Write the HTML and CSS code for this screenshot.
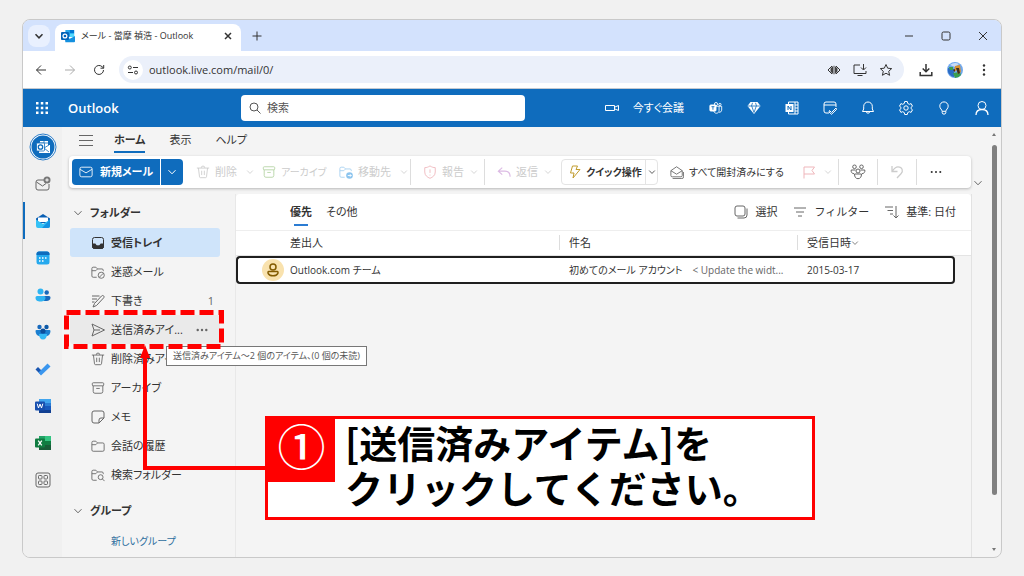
FILE: index.html
```html
<!DOCTYPE html>
<html lang="ja">
<head>
<meta charset="utf-8">
<meta name="viewport" content="width=device-width, initial-scale=1">
<title>メール - Outlook</title>
<link rel="stylesheet" href="styles.css">
</head>
<body>
<svg class="defs" aria-hidden="true">
  <symbol id="chev" viewBox="0 0 10 10"><path d="M1.500 3.200 5 6.800 8.500 3.200"/></symbol>
  <symbol id="box" viewBox="0 0 16 16"><rect x="1.500" y="2" width="13" height="3.500" rx="1"/><path d="M2.500 5.500V12a2 2 0 0 0 2 2h7a2 2 0 0 0 2-2V5.500M6 8.500h4"/></symbol>
  <symbol id="bin" viewBox="0 0 16 16"><path d="M1 3.500h14M6 3.200a2 2 0 0 1 4 0M2.800 3.500 4 13.500c.1.600.5 1 1.200 1h5.600c.7 0 1.100-.4 1.200-1l1.200-10M6.500 6.500v5M9.500 6.500v5"/></symbol>
  <symbol id="folder" viewBox="0 0 16 16"><path d="M1 5.500V4a1.500 1.500 0 0 1 1.500-1.500h3L7.500 4.500h6A1.500 1.500 0 0 1 15 6v6.500a1.500 1.500 0 0 1-1.500 1.500h-11A1.500 1.500 0 0 1 1 12.500zM1 6.500h4.500l2-2"/></symbol>
  <symbol id="folder-open" viewBox="0 0 16 16"><path d="M6.500 14h-4A1.500 1.500 0 0 1 1 12.500V4a1.500 1.500 0 0 1 1.500-1.500h3L7.500 4.500h5A1.500 1.500 0 0 1 14 6v1M1 6.500h4.500l2-2"/></symbol>
  <symbol id="mail" viewBox="0 0 16 16"><rect x="1" y="2.500" width="14" height="11" rx="2"/><path d="M1.300 5 8 9l6.700-4"/></symbol>
  <symbol id="outlook" viewBox="0 0 16 16"><path fill="#28a8ea" stroke="none" d="M5 1h10v7H5z"/><path fill="#0078d4" stroke="none" d="M10 1h5v4h-5zM5 5h5v4H5z"/><path fill="#50d9ff" stroke="none" d="M10 5h5v4h-5z"/><path fill="#1490df" stroke="none" d="M4 8l6 3 6-3v6a1 1 0 0 1-1 1H5z"/><rect fill="#0364b8" stroke="none" y="3.500" width="9" height="9" rx="1"/><circle cx="4.500" cy="8" r="2.200" stroke="#fff" stroke-width="1.400" fill="none"/></symbol>
</svg>

<div class="window">
  <header class="tabstrip">
    <button class="tab-search" aria-label="タブを検索"><svg class="i10 bold"><use href="#chev"/></svg></button>
    <div class="tab">
      <svg class="i14"><use href="#outlook"/></svg>
      <span class="tab-title">メール - 當摩 禎浩 - Outlook</span>
      <button class="plain" aria-label="タブを閉じる"><svg class="i8 bold" viewBox="0 0 8 8"><path d="m1 1 6 6M7 1 1 7"/></svg></button>
    </div>
    <button class="plain new-tab" aria-label="新しいタブ"><svg class="i10" viewBox="0 0 10 10"><path d="M5 .5v9M.5 5h9"/></svg></button>
    <div class="win-controls">
      <button aria-label="最小化"><svg class="i10" viewBox="0 0 10 10"><path d="M1 5h8"/></svg></button>
      <button aria-label="最大化"><svg class="i10" viewBox="0 0 10 10"><rect x="1" y="1" width="8" height="8" rx="1.500"/></svg></button>
      <button aria-label="閉じる"><svg class="i10" viewBox="0 0 10 10"><path d="m1 1 8 8M9 1 1 9"/></svg></button>
    </div>
  </header>

  <div class="addressbar">
    <button class="nav" aria-label="戻る"><svg class="i12" viewBox="0 0 12 12"><path d="M11 6H1.500M6 1.500 1.500 6 6 10.500"/></svg></button>
    <button class="nav faded" aria-label="進む"><svg class="i12" viewBox="0 0 12 12"><path d="M1 6h9.500M6 1.500 10.500 6 6 10.500"/></svg></button>
    <button class="nav" aria-label="再読み込み"><svg class="i12" viewBox="0 0 12 12"><path d="M10.500 6A4.500 4.500 0 1 1 9 2.600l1.500 1.400M10.700 1v3.200H7.500"/></svg></button>
    <div class="omnibox">
      <span class="site-info"><svg class="i12" viewBox="0 0 12 12"><circle cx="2.800" cy="3.500" r="1.500"/><path d="M6 3.500h5M1 8.500h5"/><circle cx="9" cy="8.500" r="1.500"/></svg></span>
      <input class="url" aria-label="アドレス" value="outlook.live.com/mail/0/">
      <svg class="i14" viewBox="0 0 14 14"><path d="M5 3 1 7l4 4M9 3l4 4-4 4"/><path fill="#444" stroke="none" d="M6.500 2.500v9L3.500 8.500v-3zM7.500 2.500v9l3-3v-3z"/></svg>
      <svg class="i14" viewBox="0 0 14 14"><path d="M7 2H1v8.500h12V8M10.500 1v5.500M8 4.500 10.500 7 13 4.500M4.500 12.500h5"/></svg>
      <svg class="i14" viewBox="0 0 14 14"><path d="m7 1.500 1.700 3.700 4 .4-3 2.700.9 4L7 10.200l-3.600 2.100.9-4-3-2.700 4-.4z"/></svg>
    </div>
    <button class="nav" aria-label="ダウンロード"><svg class="i14" viewBox="0 0 14 14"><path stroke-width="1.500" d="M7 1v7.500M3.700 5.500 7 8.800l3.300-3.300M1.200 9v3.500h11.600V9"/></svg></button>
    <button class="nav" aria-label="プロファイル"><svg class="i16" viewBox="0 0 16 16"><circle cx="8" cy="8" r="8" fill="#6fa8ee" stroke="none"/><path fill="#c9dcf6" stroke="none" d="M3 3a8 8 0 0 1 9-1L8 5z"/><path fill="#2c6cc4" stroke="none" d="M1 6l6 1v8a8 8 0 0 1-6-5z"/><path fill="#3a9e4f" stroke="none" d="M6 11l7-1 1 3a8 8 0 0 1-6 3zM2 5h4v3H3z"/><path fill="#d9912f" stroke="none" d="M8 4l5-1 1 7-3 2-1-4-3 2z"/><path fill="#3e2c20" stroke="none" d="M9 6h3l1 5-2 1zM6 8l2-1v3z"/></svg></button>
    <button class="nav" aria-label="メニュー"><svg class="i14 solid" viewBox="0 0 14 14"><circle cx="7" cy="2.500" r="1.200"/><circle cx="7" cy="7" r="1.200"/><circle cx="7" cy="11.500" r="1.200"/></svg></button>
  </div>

  <div class="suite">
    <button class="waffle" aria-label="アプリ起動ツール"><svg class="i14 solid" viewBox="0 0 14 14"><path d="M1 1h2.500v2.500H1zM5.800 1h2.500v2.500H5.800zM10.500 1H13v2.500h-2.500zM1 5.800h2.500v2.500H1zM5.800 5.800h2.500v2.500H5.800zM10.500 5.800H13v2.500h-2.500zM1 10.500h2.500V13H1zM5.800 10.500h2.500V13H5.800zM10.500 10.500H13V13h-2.500z"/></svg></button>
    <div class="brand">Outlook</div>
    <label class="search"><svg class="i12" viewBox="0 0 12 12"><circle cx="5" cy="5" r="4"/><path d="m8 8 3.500 3.500"/></svg><input placeholder="検索" aria-label="検索"></label>
    <div class="suite-actions">
      <button class="meet"><svg class="i14" viewBox="0 0 14 14"><path d="M.5 4.500h9v5h-9zM9.500 6.200l4-1.700v5l-4-1.700"/></svg>今すぐ会議</button>
      <button aria-label="Teams"><svg class="i14" viewBox="0 0 16 16"><circle cx="8" cy="3.500" r="1.800"/><circle cx="12.500" cy="4" r="1.300"/><path d="M8 6h6.500v4.500a3 3 0 0 1-3 2.500M11.500 6v5c0 4-6 4-6 0"/><rect x="1" y="4.500" width="7" height="7" rx="1" fill="#fff"/><path stroke="#0f6cbd" d="M2.800 6.500h3.400M4.500 6.500v3.500"/></svg></button>
      <button aria-label="Premium"><svg class="i14" viewBox="0 0 14 14"><path fill="#fff" stroke="none" d="M3.500 1h7L13.500 5 7 13 .5 5z"/><path stroke="#0f6cbd" stroke-width=".8" d="M1 5h12M4.700 5 7 11.500 9.300 5M4.500 5 5.500 1.800M9.500 5l-1-3.200"/></svg></button>
      <button aria-label="OneNote"><svg class="i14" viewBox="0 0 14 14"><path d="M3.500 3V1h9.500v12H3.500v-2M10 1v12M10 4h3M10 7h3M10 10h3"/><rect x="1" y="3.500" width="7" height="7" fill="#fff"/><path stroke="#0f6cbd" d="M3 9V5l3 4V5"/></svg></button>
      <button aria-label="予定"><svg class="i14" viewBox="0 0 14 14"><path d="M6 12H3a2 2 0 0 1-2-2V3a2 2 0 0 1 2-2h8a2 2 0 0 1 2 2v3M1 4h12M6.500 9.500l2 2L13 7l.5 1.500L8.500 13.300 6 11z"/></svg></button>
      <button aria-label="通知"><svg class="i14" viewBox="0 0 14 14"><path d="M7 1a4.300 4.300 0 0 0-4.300 4.300V8L1.500 10.500h11L11.300 8V5.300A4.300 4.300 0 0 0 7 1zM5.300 10.500a1.700 1.700 0 0 0 3.400 0"/></svg></button>
      <button aria-label="設定"><svg class="i16" viewBox="0 0 16 16"><circle cx="8" cy="8" r="2.200"/><path d="m6.700 1.500-.4 1.900-1.600.9-1.800-.7L1.500 6.200 3 7.400v1.200L1.500 9.800l1.400 2.600 1.800-.7 1.600.9.400 1.900h2.600l.4-1.900 1.600-.9 1.800.7 1.400-2.600L13 8.600V7.400l1.500-1.200-1.400-2.600-1.800.7-1.600-.9-.4-1.900z"/></svg></button>
      <button aria-label="ヒント"><svg class="i14" viewBox="0 0 14 14"><path d="M5.200 10.300C5 8.500 2.800 7.700 2.800 5.100a4.200 4.200 0 0 1 8.400 0c0 2.600-2.200 3.400-2.400 5.200zM5.200 10.300v1.500c0 1.800 3.600 1.800 3.600 0v-1.500"/></svg></button>
      <button aria-label="アカウント"><svg class="i16" viewBox="0 0 16 16"><circle cx="8" cy="5.500" r="4"/><path stroke-width="1.300" d="M2 15c0-3.500 2.500-5.500 6-5.500s6 2 6 5.500"/></svg></button>
    </div>
  </div>

  <div class="app">
    <nav class="rail" aria-label="アプリ">
      <a href="#" class="logo" aria-label="Outlook"><svg class="i28" viewBox="0 0 28 28"><circle cx="14" cy="14" r="13" fill="#fff" stroke="#2b7cc8"/><circle cx="14" cy="14" r="11.500" fill="#0f6cbd" stroke="none"/><path fill="#fff" stroke="none" d="M11 8h8v4h2v8H10z"/><path stroke="#0f6cbd" stroke-width=".8" d="M15 8v4M11 10h8M15 15l5-3M15 15l5 4"/><rect x="7.500" y="10" width="8" height="8" rx="1" fill="#fff" stroke="#0f6cbd" stroke-width=".8"/><circle cx="11.500" cy="14" r="2.200" stroke="#0f6cbd" stroke-width="1.300"/></svg></a>
      <a href="#" aria-label="アカウントを追加"><svg class="i16 grey" viewBox="0 0 16 16"><path d="M10 4H3a2 2 0 0 0-2 2v6a2 2 0 0 0 2 2h9a2 2 0 0 0 2-2V8M1.500 6 7.500 10 11 7.500"/><circle cx="12" cy="4" r="3.500" fill="#777" stroke="none"/><path stroke="#fff" d="M12 2.300v3.400M10.300 4h3.400"/></svg></a>
      <a href="#" class="current" aria-label="メール"><svg class="i16" viewBox="0 0 16 16"><path fill="#0a5fb4" stroke="none" d="M1 5.500 8 1l7 4.500V10H1z"/><path fill="#fff" stroke="none" d="M3 4.500h10V9H3z"/><path fill="#35c1f5" stroke="none" d="M1 6.500 8 11l7-4.500V13a2 2 0 0 1-2 2H3a2 2 0 0 1-2-2z"/><path fill="#1493e2" stroke="none" d="M15 6.500V13a2 2 0 0 1-2 2H7z"/></svg></a>
      <a href="#" aria-label="予定表"><svg class="i16" viewBox="0 0 16 16"><rect x="1.500" y="1.500" width="13" height="13" rx="2.500" fill="#25a9ee" stroke="none"/><path fill="#0f6cbd" stroke="none" d="M4 1.500h8A2.500 2.500 0 0 1 14.500 4v1h-13V4A2.500 2.500 0 0 1 4 1.500z"/><path stroke="#fff" stroke-width="1.500" stroke-dasharray="1.500 1.500" d="M4 8h8.500M4 11h5"/></svg></a>
      <a href="#" aria-label="連絡先"><svg class="i16" viewBox="0 0 16 16"><circle cx="11.700" cy="5.500" r="2.200" fill="#1769bd" stroke="none"/><path fill="#1769bd" stroke="none" d="M9 9h5a1.500 1.500 0 0 1 1.500 1.500c0 2-1.500 3.500-4 3.500H9z"/><circle cx="5.500" cy="4.500" r="3" fill="#2fb4f2" stroke="none"/><path fill="#2fb4f2" stroke="none" d="M2 9h7a1.500 1.500 0 0 1 1.500 1.500c0 3-2 4-5 4s-5-1-5-4A1.500 1.500 0 0 1 2 9z"/></svg></a>
      <a href="#" aria-label="グループ"><svg class="i16" viewBox="0 0 16 16"><circle cx="4.500" cy="3" r="2.200" fill="#1769bd" stroke="none"/><circle cx="11.500" cy="3" r="2.200" fill="#0c59a8" stroke="none"/><path fill="#1b7fd0" stroke="none" d="M1.500 6h13A1.200 1.200 0 0 1 15.500 7c0 3-2 5-4 5h-7c-2 0-4-2-4-5a1 1 0 0 1 1-1z"/><circle cx="8" cy="7" r="2.600" fill="#0b4f9c" stroke="none"/><path fill="#35baf6" stroke="none" d="M4 10h8c0 3.500-1.500 5.500-4 5.500S4 13.500 4 10z"/></svg></a>
      <a href="#" aria-label="To Do"><svg class="i16" viewBox="0 0 16 16"><path fill="#1a56b0" stroke="none" d="m.5 8.500 2.500-2.500 5 5-2.500 2.500z"/><path fill="#3a96ee" stroke="none" d="m3.500 11.500 9-9 3 3-9.500 9z"/></svg></a>
      <a href="#" aria-label="Word"><svg class="i16" viewBox="0 0 16 16"><path fill="#41a5ee" stroke="none" d="M4 1h12v4H4z"/><path fill="#2b7cd3" stroke="none" d="M4 5h12v3H4z"/><path fill="#185abd" stroke="none" d="M4 8h12v4H4z"/><path fill="#103f91" stroke="none" d="M4 12h12v3H4z"/><rect y="3.500" width="10" height="9" rx="1" fill="#174fae" stroke="none"/><path stroke="#fff" d="M2.200 5.700 3.500 10 5 6l1.500 4 1.300-4.300"/></svg></a>
      <a href="#" aria-label="Excel"><svg class="i16" viewBox="0 0 16 16"><path fill="#21a366" stroke="none" d="M4 1h6v5H4z"/><path fill="#33c481" stroke="none" d="M10 1h6v5h-6z"/><path fill="#107c41" stroke="none" d="M4 6h12v4H4z"/><path fill="#185c37" stroke="none" d="M4 10h12v5H4z"/><rect y="3.500" width="10" height="9" rx="1" fill="#107c41" stroke="none"/><path stroke="#fff" stroke-width="1.300" d="m3.200 5.700 3.600 4.600M6.800 5.700l-3.600 4.600"/></svg></a>
      <a href="#" aria-label="その他のアプリ"><svg class="i16 grey" viewBox="0 0 16 16"><rect x="1" y="1" width="14" height="14" rx="2"/><rect x="3.500" y="3.500" width="3.500" height="3.500" rx=".8"/><rect x="9" y="3.500" width="3.500" height="3.500" rx=".8"/><rect x="3.500" y="9" width="3.500" height="3.500" rx=".8"/><rect x="9" y="9" width="3.500" height="3.500" rx=".8"/></svg></a>
    </nav>

    <div class="workspace">
      <div class="ribbon-tabs">
        <button aria-label="ナビゲーション"><svg class="i14 grey" viewBox="0 0 14 14"><path d="M0 2.500h14M0 7.500h14M0 12.500h14"/></svg></button>
        <button class="active">ホーム</button>
        <button>表示</button>
        <button>ヘルプ</button>
      </div>
      <div class="ribbon-row">
        <div class="ribbon">
          <div class="compose">
            <button><svg class="i14"><use href="#mail"/></svg>新規メール</button>
            <button aria-label="新規メールのオプション"><svg class="i10"><use href="#chev"/></svg></button>
          </div>
          <button class="tool off w66"><svg class="i14"><use href="#bin"/></svg>削除<svg class="i8 end"><use href="#chev"/></svg></button>
          <button class="tool off w77 dense"><svg class="i14 green"><use href="#box"/></svg>アーカイブ</button>
          <button class="tool off w77"><svg class="i14 sky" viewBox="0 0 16 16"><use href="#folder-open"/><circle cx="12" cy="12" r="3.800" fill="#8cc4ee" stroke="none"/><path stroke="#fff" d="M10 12h4M12.500 10.500 14 12l-1.500 1.500"/></svg>移動先<svg class="i8 end"><use href="#chev"/></svg></button>
          <button class="tool off w66 sep"><svg class="i14 pink" viewBox="0 0 16 16"><path d="M8 1c2 1.500 4 2 6 2v5c0 4-3 6-6 7.200C5 14 2 12 2 8V3c2 0 4-.5 6-2zM8 5v4M8 11v1"/></svg>報告<svg class="i8 end"><use href="#chev"/></svg></button>
          <button class="tool off w66 sep"><svg class="i14 violet" viewBox="0 0 16 16"><path stroke-width="1.300" d="M6 3 1.500 7 6 11M1.500 7H9c4 0 6 2.500 6 6.500"/></svg>返信<svg class="i8 end"><use href="#chev"/></svg></button>
          <div class="quick dense">
            <button><svg class="i14 gold" viewBox="0 0 14 14"><path d="M4.500 1h5L8 4.500h4L5 13l1-5H2.500z"/></svg>クイック操作</button>
            <button aria-label="クイック操作のオプション"><svg class="i8"><use href="#chev"/></svg></button>
          </div>
          <button class="tool read dense"><svg class="i14" viewBox="0 0 16 16"><path d="M1 6.500 7.500 2 14 6.500V12a1.500 1.500 0 0 1-1.500 1.500h-10A1.500 1.500 0 0 1 1 12zM1 6.500l6.500 4 6.500-4M3 15.500h10.500a2 2 0 0 0 2-2V8"/></svg>すべて開封済みにする</button>
          <button class="tool off flag" aria-label="フラグ"><svg class="i14 pink" viewBox="0 0 14 14"><path d="M2 13.500V2h10.500L10 5.500 12.500 9H2"/></svg><svg class="i8"><use href="#chev"/></svg></button>
          <button class="tool sep icon" aria-label="グループ"><svg class="i16 grey" viewBox="0 0 16 16"><circle cx="4.500" cy="2.800" r="1.800"/><circle cx="11.500" cy="2.800" r="1.800"/><circle cx="8" cy="7" r="2"/><path d="M5.500 6H1.200C.8 8 2 9.700 4 9.700M10.500 6h4.300c.4 2-.8 3.700-2.800 3.700M4.500 10h7c0 3-1.300 4.700-3.500 4.700S4.500 13 4.500 10z"/></svg></button>
          <button class="tool sep icon off" aria-label="元に戻す"><svg class="i14" viewBox="0 0 14 14"><path stroke-width="1.300" d="M2 1v5.500h5.500M2.200 6.300C4 3.500 5.500 1.800 8 1.800c4.500 0 5.500 4.500 3 7L7 13"/></svg></button>
          <button class="tool sep more" aria-label="その他"><svg class="i12 solid" viewBox="0 0 14 14"><circle cx="2" cy="7" r="1.200"/><circle cx="7" cy="7" r="1.200"/><circle cx="12" cy="7" r="1.200"/></svg></button>
        </div>
        <button class="plain collapse" aria-label="リボンを折りたたむ"><svg class="i10"><use href="#chev"/></svg></button>
      </div>

      <div class="panes">
        <nav class="folders" aria-label="フォルダー">
          <button class="heading"><svg class="i10"><use href="#chev"/></svg>フォルダー</button>
          <ul>
            <li><a href="#" class="selected"><svg class="i14" viewBox="0 0 14 14"><rect x="1.500" y="1.500" width="11" height="11" rx="2"/><path fill="#333" d="M1.500 8h3c0 2.500 5 2.500 5 0h3v2.500a2 2 0 0 1-2 2h-7a2 2 0 0 1-2-2z"/></svg>受信トレイ</a></li>
            <li><a href="#"><svg class="i14" viewBox="0 0 16 16"><use href="#folder-open"/><circle cx="11.700" cy="11.700" r="3.500"/><path d="m9.500 14 4.500-4.500"/></svg>迷惑メール</a></li>
            <li><a href="#"><svg class="i14" viewBox="0 0 14 14"><path d="M3.500 9.500 10.500 2c1.500-1.500 3.500.5 2 2L5.500 11.500l-3.500 1.500zM1 2h7.500M1 5h5M1 8h2.500"/></svg>下書き<span class="count">1</span></a></li>
            <li><a href="#" class="hover"><svg class="i14" viewBox="0 0 14 14"><path d="M1 1 13.500 7 1 13l2-6zM3 7h6"/></svg>送信済みアイ...<svg class="i12 solid count" viewBox="0 0 14 14"><circle cx="2" cy="7" r="1.400"/><circle cx="7" cy="7" r="1.400"/><circle cx="12" cy="7" r="1.400"/></svg></a></li>
            <li><a href="#"><svg class="i14"><use href="#bin"/></svg>削除済みアイ...</a></li>
            <li><a href="#"><svg class="i14"><use href="#box"/></svg>アーカイブ</a></li>
            <li><a href="#"><svg class="i14" viewBox="0 0 14 14"><path d="M3 1h8a2 2 0 0 1 2 2v5l-5 5H3a2 2 0 0 1-2-2V3a2 2 0 0 1 2-2zM13 8h-3a2 2 0 0 0-2 2v3"/></svg>メモ</a></li>
            <li><a href="#"><svg class="i14"><use href="#folder"/></svg>会話の履歴</a></li>
            <li><a href="#"><svg class="i14" viewBox="0 0 16 16"><use href="#folder-open"/><circle cx="11" cy="10.500" r="2.800"/><path d="m13 12.500 2.500 2.500"/></svg>検索フォルダー</a></li>
          </ul>
          <button class="heading groups"><svg class="i10"><use href="#chev"/></svg>グループ</button>
          <a href="#" class="new-group">新しいグループ</a>
        </nav>

        <main class="list">
          <div class="list-bar">
            <button class="pivot active">優先</button>
            <button class="pivot">その他</button>
            <div class="list-tools">
              <button><svg class="i14" viewBox="0 0 14 14"><rect x="1" y="1" width="10" height="10" rx="2"/><path d="M3.500 13H10a3 3 0 0 0 3-3V3.500"/></svg>選択</button>
              <button><svg class="i14" viewBox="0 0 14 14"><path d="M1 3h12M3 7h8M5 11h4"/></svg>フィルター</button>
              <button><svg class="i14" viewBox="0 0 14 14"><path d="M0 2h8M2.500 5.500H8M5 9h3M11 1v12M8.500 10.500 11 13l2.500-2.500"/></svg>基準: 日付</button>
            </div>
          </div>
          <table>
            <colgroup><col class="c-from"><col class="c-subject"><col><col class="c-end"></colgroup>
            <thead><tr><th>差出人</th><th>件名</th><th>受信日時<svg class="i8"><use href="#chev"/></svg></th><th></th></tr></thead>
            <tbody><tr>
              <td><div class="from"><svg class="i22" viewBox="0 0 22 22"><circle cx="11" cy="11" r="11" fill="#f9e2ae" stroke="none"/><g stroke="#835b00" stroke-width="1.500"><circle cx="11" cy="8" r="3"/><path d="M6.700 12.500h8.600c1.300 0 1.300 4.300-4.300 4.300s-5.600-4.300-4.300-4.300z"/></g></svg>Outlook.com チーム</div></td>
              <td><div class="subject"><span>初めてのメール アカウント</span><span class="preview">&lt; Update the widt...</span></div></td>
              <td class="date">2015-03-17</td>
              <td></td>
            </tr></tbody>
          </table>
        </main>
        <div class="gutter"></div>
      </div>
    </div>
    <div class="scrollbar" aria-hidden="true"><span class="up"></span><span class="thumb"></span><span class="down"></span></div>
  </div>
</div>

<div class="tooltip" role="tooltip">送信済みアイテム～2 個のアイテム、(0 個の未読)</div>
<svg class="marker" viewBox="0 0 210 170" aria-hidden="true">
  <rect x="6.500" y="6.500" width="155" height="34" fill="none" stroke="#f00" stroke-width="5" stroke-dasharray="14 5"/>
  <path d="M205 162H85V48" fill="none" stroke="#f00" stroke-width="4"/>
  <path d="M85 39 90 52H80z" fill="#f00" stroke="none"/>
</svg>
<aside class="callout">
  <span class="step">①</span>
  <p>[送信済みアイテム]を<br>クリックしてください。</p>
</aside>
</body>
</html>
```

FILE: styles.css
```css
* { box-sizing: border-box; }

body {
  position: relative;
  margin: 0;
  padding: 19px 22px;
  min-height: 100vh;
  display: flex;
  background: #f1f1f1;
  color: #333;
  font-family: "Open Sans", "Noto Sans CJK JP", sans-serif;
  font-size: 11px;
  line-height: 16px;
  font-feature-settings: "palt";
}

button, input {
  margin: 0;
  padding: 0;
  border: 0;
  background: none;
  color: inherit;
  font: inherit;
  font-feature-settings: inherit;
}

button {
  display: flex;
  align-items: center;
  justify-content: center;
  white-space: nowrap;
}

a { color: inherit; text-decoration: none; }

svg { flex: none; fill: none; stroke: currentColor; stroke-width: 1; }
.defs { position: absolute; width: 0; height: 0; }
.solid { fill: currentColor; stroke: none; }
.bold { stroke-width: 1.5; }
.i8 { width: 8px; height: 8px; }
.i10 { width: 10px; height: 10px; }
.i12 { width: 12px; height: 12px; }
.i14 { width: 14px; height: 14px; }
.i16 { width: 16px; height: 16px; }
.i22 { width: 22px; height: 22px; }
.i28 { width: 28px; height: 28px; }
.grey, .folders svg, .list-tools svg, .read svg, th svg, .collapse svg { color: #666; }
.folders .selected svg { color: #333; }
.off .green { color: #b5d3a3; }
.off .sky { color: #a5d0f0; }
.off .pink { color: #efb6bb; }
.off .violet { color: #dcbbe4; }
.gold { color: #c19c2e; }

.window {
  flex: 1;
  min-width: 0;
  display: flex;
  flex-direction: column;
  overflow: hidden;
  border: 1px solid #c9c9c9;
  border-radius: 8px;
  background: #f4f4f4;
}

/* Browser frame */
.tabstrip {
  display: flex;
  align-items: center;
  height: 31px;
  padding-left: 5px;
  background: #d3e2fd;
}
.tab-search { width: 22px; height: 22px; border-radius: 8px; background: #e9f0fe; }
.tab {
  align-self: flex-end;
  display: flex;
  align-items: center;
  gap: 6px;
  width: 186px;
  height: 27px;
  margin-left: 5px;
  padding: 0 9px 3px 6px;
  border-radius: 8px 8px 0 0;
  background: #fff;
  font-size: 9px;
}
.tab-title { flex: 1; white-space: nowrap; }
.new-tab { margin-left: 11px; }
.win-controls { display: flex; margin-left: auto; }
.win-controls button { width: 37px; height: 31px; }

.addressbar {
  display: flex;
  align-items: center;
  height: 38px;
  padding: 0 3px;
  border-bottom: 1px solid #c4c9d0;
  background: #fff;
}
.nav { width: 29px; height: 28px; }
.faded { color: #aaa; }
.omnibox {
  flex: 1;
  display: flex;
  align-items: center;
  gap: 12px;
  height: 27px;
  margin: 0 7px 0 6px;
  padding: 0 11px 0 4px;
  border-radius: 14px;
  background: #ebf0fa;
}
.site-info { display: flex; padding: 4px; border-radius: 50%; background: #fff; }
.url { flex: 1; min-width: 0; margin-left: -6px; }

/* Outlook header */
.suite {
  display: flex;
  align-items: center;
  height: 38px;
  background: #0f6cbd;
  color: #fff;
}
.waffle { width: 38px; height: 38px; }
.brand { width: 180px; padding-left: 7px; font-size: 13px; font-weight: 600; }
.search {
  flex: 0 1 284px;
  display: flex;
  align-items: center;
  gap: 6px;
  height: 26px;
  padding: 0 8px;
  border-radius: 4px;
  background: #fff;
  color: #555;
}
.search input { flex: 1; min-width: 0; }
.search input::placeholder { color: #555; opacity: 1; }
.suite-actions { display: flex; margin-left: auto; }
.suite-actions button { width: 38px; height: 38px; }
.suite-actions .meet { width: auto; gap: 14px; margin-right: 13px; }

/* App shell */
.app { flex: 1; display: flex; }
.rail { width: 39px; padding-top: 1px; background: #f0f0f0; }
.rail a { display: flex; align-items: center; justify-content: center; height: 37px; }
.rail .current { border-left: 2px solid #0f6cbd; padding-right: 2px; }
.workspace { flex: 1; min-width: 0; display: flex; flex-direction: column; }

.ribbon-tabs { display: flex; gap: 24px; height: 26px; padding: 2px 18px 0 17px; }
.ribbon-tabs button { height: 24px; border-bottom: 2px solid transparent; }
.ribbon-tabs button:first-child { margin-right: -3px; }
.ribbon-tabs .active { border-color: #0f6cbd; font-weight: 600; }

.ribbon-row { display: flex; align-items: flex-end; padding: 3px 2px 0 7px; }
.ribbon {
  flex: 1;
  min-width: 0;
  display: flex;
  align-items: center;
  height: 32px;
  padding-left: 3px;
  border-radius: 4px;
  background: #fff;
  box-shadow: 0 1px 3px rgba(0, 0, 0, .25);
}
.compose { display: flex; gap: 1px; height: 26px; margin-right: 7px; color: #fff; font-weight: 600; }
.compose button { gap: 7px; width: 88px; background: #0f6cbd; border-radius: 4px 0 0 4px; }
.compose button + button { width: 22px; border-radius: 0 4px 4px 0; }
.tool { justify-content: flex-start; gap: 5px; height: 26px; padding-left: 6px; }
.dense { font-size: 10px; }
.off { color: #ccc; }
.end { margin-left: auto; margin-right: 2px; }
.w66 { width: 66px; }
.w77 { width: 77px; }
.w66.sep { width: 74px; padding: 0 4px 0 12px; }
.sep { border-left: 1px solid #ddd; }
.quick {
  display: flex;
  height: 26px;
  padding: 0 0 0 3px;
  margin-left: 3px;
  border: 1px solid #e4e4e4;
  border-radius: 4px;
  font-weight: 600;
}
.quick button { gap: 4px; width: 80px; }
.quick button + button { width: 12px; border-left: 1px solid #e4e4e4; }
.read { margin-left: 6px; }
.flag { margin-left: auto; gap: 8px; padding-right: 6px; }
.icon { width: 39px; justify-content: center; padding: 0; }
.more { width: 55px; padding-left: 13px; }
.collapse { width: 14px; }

/* Panes */
.panes { flex: 1; display: flex; padding-top: 6px; }
.folders { width: 174px; padding: 10px 15px 8px 8px; border-right: 1px solid #e8e8e8; }
.heading { gap: 7px; height: 18px; margin: 0 0 6px 3px; font-weight: 600; }
.folders ul { margin: 0; padding: 0; list-style: none; }
.folders li a {
  display: flex;
  align-items: center;
  gap: 6px;
  height: 29px;
  padding: 0 6px 0 21px;
  border-radius: 3px;
  white-space: nowrap;
}
.folders .selected { background: #cfe4fa; font-weight: 600; }
.folders .hover { background: #eaeaea; }
.folders li a.hover { padding-right: 12px; }
.count { margin-left: auto; color: #666; }
.groups { margin-top: 13px; }
.new-group { display: block; padding: 7px 0 0 41px; color: #2f6f9f; font-size: 10px; }

.list { flex: 1; min-width: 0; }
.list-bar {
  display: flex;
  gap: 14px;
  height: 36px;
  padding: 0 15px 0 54px;
  border-radius: 4px 4px 0 0;
  background: #fff;
}
.pivot { position: relative; }
.pivot.active { font-weight: 700; }
.pivot.active::after {
  content: "";
  position: absolute;
  left: 4px;
  right: 4px;
  bottom: 4px;
  height: 2px;
  background: #2b7cd3;
}
.list-tools { display: flex; gap: 16px; margin-left: auto; font-feature-settings: normal; }
.list-tools button { gap: 7px; }

table { width: 100%; table-layout: fixed; border-collapse: separate; border-spacing: 0; }
.c-from { width: 323px; }
.c-subject { width: 238px; }
.c-end { width: 16px; }
th {
  position: relative;
  height: 26px;
  padding: 0 10px;
  border-top: 1px solid #eee;
  border-bottom: 1px solid #e4e4e4;
  background: #fff;
  font-weight: 400;
  text-align: left;
}
th:first-child { padding-left: 54px; }
th + th:not(:last-child)::before {
  content: "";
  position: absolute;
  left: 0;
  top: 4px;
  height: 15px;
  border-left: 1px solid #ddd;
}
td {
  height: 28px;
  padding: 0 10px;
  border: solid #1f1f1f;
  border-width: 2px 0;
  background: #fff;
  font-size: 10px;
}
td:first-child { padding-left: 24px; border-left-width: 2px; border-radius: 4px 0 0 4px; }
td:nth-child(3) { border-right-width: 2px; border-radius: 0 4px 4px 0; }
td:last-child { background: none; border: 0; }
.from, .subject { display: flex; align-items: center; gap: 6px; white-space: nowrap; }
.subject { gap: 10px; }
.preview { color: #666; }
.gutter { width: 16px; border-left: 1px solid #e2e2e2; }

.scrollbar { width: 14px; display: flex; flex-direction: column; align-items: center; padding: 6px 0; gap: 9px; }
.thumb { width: 5px; height: 350px; border-radius: 3px; background: #808080; }
.up, .down { border: 2px solid transparent; }
.up { border-top-width: 0; border-bottom: 3px solid #777; }
.down { margin-top: auto; border-bottom-width: 0; border-top: 3px solid #777; }

/* Annotations laid over the window */
.tooltip {
  position: absolute;
  left: 166px;
  top: 346px;
  padding: 1px 6px;
  border: 1px solid #777;
  background: #fff;
  color: #555;
  font-size: 9px;
  white-space: nowrap;
}
.marker { position: absolute; left: 60px; top: 306px; width: 210px; height: 170px; }
.callout {
  position: absolute;
  left: 265px;
  top: 416px;
  width: 550px;
  display: flex;
  align-items: flex-start;
  gap: 10px;
  border: 3px solid #f00;
  background: #fff;
  color: #000;
  font-family: "Noto Sans CJK JP", sans-serif;
  font-feature-settings: normal;
}
.callout p { margin: 0; padding: 0 0 8px; font-size: 38px; font-weight: 700; line-height: 45px; white-space: nowrap; }
.step {
  width: 67px;
  height: 63px;
  background: #f00;
  color: #fff;
  font-size: 48px;
  font-weight: 500;
  line-height: 50px;
  text-align: center;
}
```
